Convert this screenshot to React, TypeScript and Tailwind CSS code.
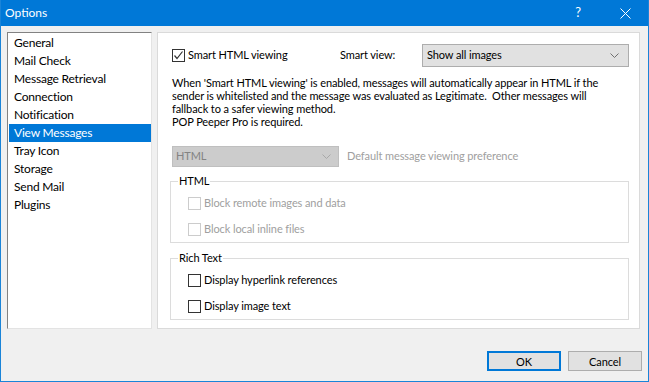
import React from 'react';

const font = { fontFamily: 'Lato, "Noto Sans", sans-serif' };

const menuItems = [
  'General',
  'Mail Check',
  'Message Retrieval',
  'Connection',
  'Notification',
  'View Messages',
  'Tray Icon',
  'Storage',
  'Send Mail',
  'Plugins',
];

const Chevron: React.FC<{ color: string }> = ({ color }) => (
  <svg width="9" height="5" viewBox="0 0 9 5" className="shrink-0">
    <path d="M0.5 0.5 L4.5 4.5 L8.5 0.5" fill="none" stroke={color} strokeWidth="1" />
  </svg>
);

const CheckBox: React.FC<{ checked?: boolean; disabled?: boolean; label: string }> = ({
  checked,
  disabled,
  label,
}) => (
  <div className="flex items-center h-[15px]">
    <div
      className={`w-[13px] h-[13px] border bg-white flex items-center justify-center ${
        disabled ? 'border-[#cccccc]' : 'border-[#333333]'
      }`}
    >
      {checked && (
        <svg width="11" height="11" viewBox="0 0 11 11">
          <path d="M1.5 5.5 L4 8.5 L9.5 1.5" fill="none" stroke="#333333" strokeWidth="1.2" />
        </svg>
      )}
    </div>
    <span className={`ml-[3px] ${disabled ? 'text-[#a0a0a0]' : 'text-black'}`}>{label}</span>
  </div>
);

const GroupBox: React.FC<{ title: string; children: React.ReactNode; className?: string }> = ({
  title,
  children,
  className,
}) => (
  <div className={`relative border border-[#dcdcdc] h-[62px] ${className ?? ''}`}>
    <span className="absolute left-[7px] top-[-9px] bg-white px-[1px] leading-[16px] text-black">
      {title}
    </span>
    <div className="pl-[17px] pt-[14px] flex flex-col gap-[11px]">{children}</div>
  </div>
);

const App: React.FC = () => {
  return (
    <div
      className="w-[649px] h-[382px] bg-[#f0f0f0] border-x border-b border-[#1a84d8] flex flex-col text-[11px] tracking-[-0.1px] text-black overflow-hidden"
      style={font}
    >
      {/* Title bar */}
      <div className="h-[26px] bg-[#0078d7] flex items-center text-white shrink-0 -mx-px">
        <span className="ml-[5px] text-[12px] tracking-normal">Options</span>
        <div className="flex-1" />
        <span className="mr-[39px] text-[13px]">?</span>
        <svg width="11" height="11" viewBox="0 0 11 11" className="mr-[18px]">
          <path d="M0.5 0.5 L10.5 10.5 M10.5 0.5 L0.5 10.5" stroke="white" strokeWidth="1" />
        </svg>
      </div>

      {/* Body */}
      <div className="flex gap-[5px] pl-[6px] pt-[6px]">
        {/* Category list */}
        <div className="w-[145px] h-[297px] bg-white border-l border-t border-[#828282] border-r-[#e3e3e3] border-b-[#e3e3e3] border-r border-b pt-[1px] pl-[1px] text-[12px] tracking-[-0.2px]">
          {menuItems.map((item) => (
            <div
              key={item}
              className={`h-[18px] leading-[18px] pl-[5px] ${
                item === 'View Messages' ? 'bg-[#0078d7] text-white' : 'text-black'
              }`}
            >
              {item}
            </div>
          ))}
        </div>

        {/* Settings panel */}
        <div className="w-[483px] h-[297px] bg-white border border-[#dadada] pl-[14px] pr-[10px] pt-[11px]">
          <div className="flex items-center h-[23px]">
            <div className="w-[168px]">
              <CheckBox checked label="Smart HTML viewing" />
            </div>
            <span className="w-[82px]">Smart view:</span>
            <div className="w-[207px] h-[23px] bg-[#e1e1e1] border border-[#adadad] flex items-center justify-between pl-[4px] pr-[9px]">
              <span>Show all images</span>
              <Chevron color="#707070" />
            </div>
          </div>

          <p className="mt-[9px] leading-[13px] whitespace-nowrap">
            When 'Smart HTML viewing' is enabled, messages will automatically appear in HTML if the
            <br />
            sender is whitelisted and the message was evaluated as Legitimate.&nbsp; Other messages will
            <br />
            fallback to a safer viewing method.
            <br />
            POP Peeper Pro is required.
          </p>

          <div className="flex items-center mt-[18px] h-[21px]">
            <div className="w-[167px] h-[21px] bg-[#cccccc] border border-[#bfbfbf] flex items-center justify-between pl-[3px] pr-[7px] text-[#838383]">
              <span>HTML</span>
              <Chevron color="#a8a8a8" />
            </div>
            <span className="ml-[8px] text-[#a0a0a0]">Default message viewing preference</span>
          </div>

          <GroupBox title="HTML" className="mt-[14px] -ml-[2px] w-[459px]">
            <CheckBox disabled label="Block remote images and data" />
            <CheckBox disabled label="Block local inline files" />
          </GroupBox>

          <GroupBox title="Rich Text" className="mt-[15px] -ml-[2px] w-[459px]">
            <CheckBox label="Display hyperlink references" />
            <CheckBox label="Display image text" />
          </GroupBox>
        </div>
      </div>

      {/* Buttons */}
      <div className="flex justify-end gap-[7px] pr-[6px] mt-[22px]">
        <button className="w-[74px] h-[20px] bg-[#e1e1e1] border-2 border-[#0078d7] text-black leading-none">
          OK
        </button>
        <button className="w-[74px] h-[20px] bg-[#e1e1e1] border border-[#adadad] text-black leading-none">
          Cancel
        </button>
      </div>
    </div>
  );
};

export default App;
